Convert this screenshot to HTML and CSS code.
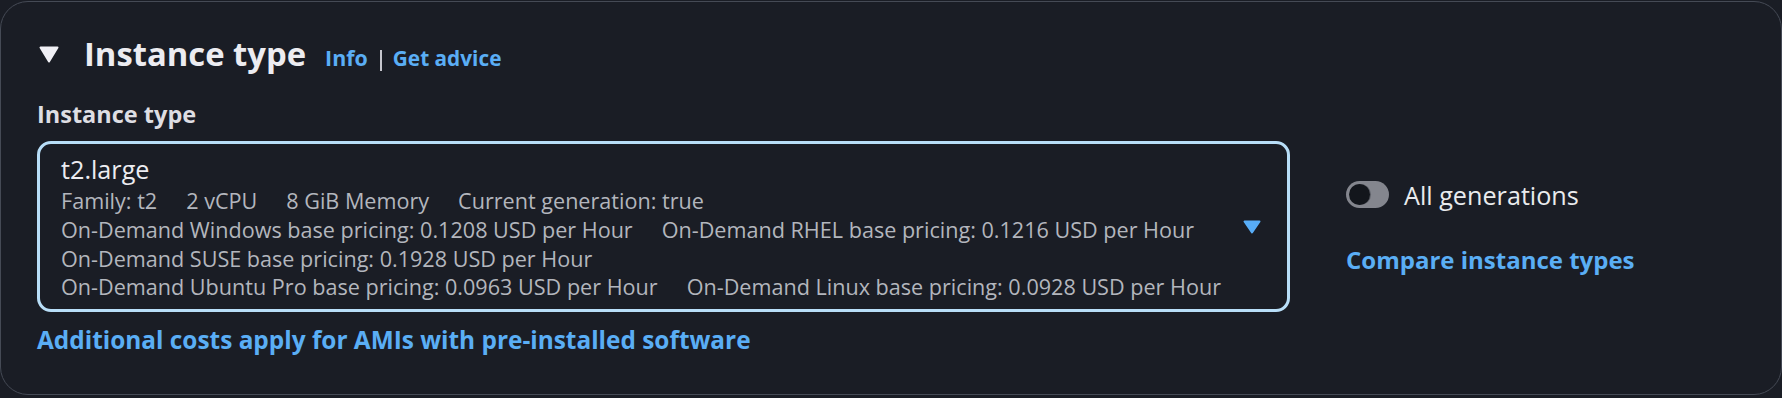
FILE: index.html
```html
<!DOCTYPE html>
<html lang="en">
<head>
<meta charset="utf-8">
<title>Instance type</title>
<link rel="stylesheet" href="styles.css">
</head>
<body>
<section class="card">
  <div class="header">
    <svg class="expand-icon" width="20" height="17" viewBox="0 0 20 17" aria-hidden="true">
      <path d="M1.5 1.5 H18.5 L10 15.5 Z" fill="#f0f0f5" stroke="#f0f0f5" stroke-width="2" stroke-linejoin="round"/>
    </svg>
    <h2 class="title">Instance type</h2>
    <a class="link info">Info</a>
    <span class="sep"></span>
    <a class="link advice">Get advice</a>
  </div>

  <div class="field">
    <div class="left">
      <div class="label">Instance type</div>
      <div class="select">
        <div class="select-body">
          <div class="option-title">t2.large</div>
          <div class="row"><span>Family: t2</span><span>2 vCPU</span><span>8 GiB Memory</span><span>Current generation: true</span></div>
          <div class="row"><span>On-Demand Windows base pricing: 0.1208 USD per Hour</span><span>On-Demand RHEL base pricing: 0.1216 USD per Hour</span></div>
          <div class="row"><span>On-Demand SUSE base pricing: 0.1928 USD per Hour</span></div>
          <div class="row"><span>On-Demand Ubuntu Pro base pricing: 0.0963 USD per Hour</span><span>On-Demand Linux base pricing: 0.0928 USD per Hour</span></div>
        </div>
        <svg class="caret" width="18" height="14" viewBox="0 0 18 14" aria-hidden="true">
          <path d="M1.5 1.5 H16.5 L9 12.5 Z" fill="#58adf7" stroke="#58adf7" stroke-width="2" stroke-linejoin="round"/>
        </svg>
      </div>
      <a class="link extra">Additional costs apply for AMIs with pre-installed software</a>
    </div>

    <div class="right">
      <div class="toggle-row">
        <span class="toggle"><span class="knob"></span></span>
        <span class="toggle-label">All generations</span>
      </div>
      <a class="link compare">Compare instance types</a>
    </div>
  </div>
</section>
</body>
</html>
```

FILE: styles.css
```css
html, body {
  margin: 0;
  padding: 0;
  background: #1a1d25;
}

body {
  font-family: "Open Sans", "Noto Sans", sans-serif;
  color: #e9ebed;
  padding-top: 1px;
}

.card {
  box-sizing: border-box;
  width: 1782px;
  border: 1px solid #454a55;
  border-radius: 28px;
  background: #1a1d25;
  padding: 32px 36px 39px 36px;
}

.header {
  display: flex;
  align-items: baseline;
  height: 40px;
}

.expand-icon {
  align-self: flex-start;
  margin-top: 12px;
  margin-left: 2px;
  margin-right: 25px;
  flex: none;
}

.title {
  margin: 0;
  font-size: 32.8px;
  line-height: 40px;
  font-weight: 700;
  color: #ececf1;
}

.link {
  color: #5aaef5;
  font-weight: 700;
  text-decoration: none;
  cursor: pointer;
}

.info {
  margin-left: 19px;
  font-size: 21.4px;
  line-height: 28.8px;
}

.sep {
  align-self: flex-start;
  margin-top: 16px;
  margin-left: 12px;
  margin-right: 11px;
  width: 2px;
  height: 21px;
  background: #c6c6cd;
}

.advice {
  font-size: 20.8px;
  line-height: 28.8px;
}

.field {
  display: flex;
  margin-top: 22px;
}

.left {
  width: 1253px;
  flex: none;
}

.label {
  font-size: 23.5px;
  line-height: 36px;
  font-weight: 700;
  color: #dedee3;
}

.select {
  box-sizing: border-box;
  margin-top: 9px;
  display: flex;
  align-items: center;
  border: 3px solid #b8def8;
  border-radius: 14px;
  padding: 7px 26px 7px 21px;
}

.select-body {
  flex: 1;
}

.option-title {
  font-size: 25.2px;
  line-height: 36px;
  color: #ececf1;
}

.row {
  display: flex;
  gap: 29px;
  font-size: 21.6px;
  line-height: 28.8px;
  color: #b3b6bd;
  white-space: nowrap;
}

.caret {
  flex: none;
}

.extra {
  display: block;
  margin-top: 14px;
  font-size: 24.4px;
  line-height: 28.8px;
}

.right {
  margin-left: 56px;
  padding-top: 80.5px;
  display: flex;
  flex-direction: column;
  align-items: flex-start;
}

.toggle-row {
  display: flex;
  align-items: center;
  height: 36px;
}

.toggle {
  position: relative;
  width: 43px;
  height: 27px;
  border-radius: 14px;
  background: #84868e;
  flex: none;
}

.knob {
  position: absolute;
  left: 3px;
  top: 3px;
  width: 21px;
  height: 21px;
  border-radius: 50%;
  background: #13161c;
  box-shadow: 1px 0 0 #5b5e66;
}

.toggle-label {
  margin-left: 15px;
  font-size: 25.2px;
  line-height: 36px;
  color: #e9ebed;
}

.compare {
  margin-top: 29.5px;
  font-size: 24px;
  line-height: 36px;
}
```
